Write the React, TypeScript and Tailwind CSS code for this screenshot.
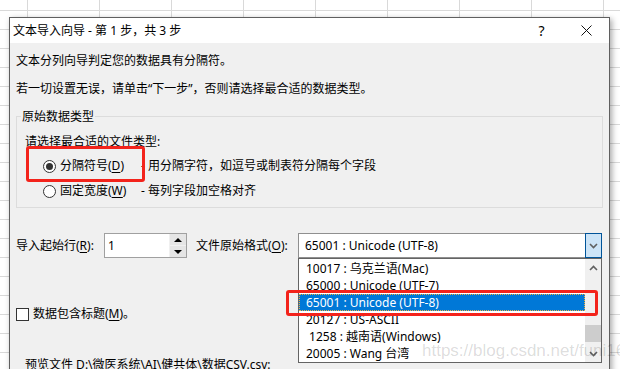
import React from "react";

const u = (c: string) => <span className="underline underline-offset-2">{c}</span>;

function Radio({ checked }: { checked?: boolean }) {
  return (
    <span className="flex h-[13px] w-[13px] items-center justify-center rounded-full border border-[#333] bg-white">
      {checked && <span className="h-[7px] w-[7px] rounded-full bg-[#333]" />}
    </span>
  );
}

function Chevron({ up }: { up?: boolean }) {
  return (
    <svg width="9" height="6" viewBox="0 0 9 6" className={up ? "" : "rotate-180"}>
      <path d="M1 5 L4.5 1.5 L8 5" fill="none" stroke="#606060" strokeWidth="1.6" />
    </svg>
  );
}

const encodings = [
  "10017 : 乌克兰语(Mac)",
  "65000 : Unicode (UTF-7)",
  "65001 : Unicode (UTF-8)",
  "20127 : US-ASCII",
  " 1258 : 越南语(Windows)",
  "20005 : Wang 台湾",
];

export default function App() {
  return (
    <div className="relative h-[369px] w-[620px] overflow-hidden bg-white bg-[linear-gradient(to_right,#d9d9d9_1px,transparent_1px),linear-gradient(to_bottom,#d9d9d9_1px,transparent_1px)] bg-[length:72px_19px] bg-[position:27px_10px] pl-[9px] pt-[17px] font-['Noto_Sans','Noto_Sans_CJK_SC',sans-serif] text-[12px] text-black">
      {/* Dialog */}
      <div className="h-[400px] w-[601px] border border-[#5f5f5f] bg-[#f0f0f0] shadow-[2px_2px_6px_rgba(0,0,0,0.35)]">
        {/* Title bar */}
        <div className="flex h-[25px] items-center bg-white pl-[3px]">
          <div className="flex-1 leading-[16px]">文本导入向导 - 第 1 步，共 3 步</div>
          <div className="flex w-[45px] justify-center text-[14px]">?</div>
          <div className="flex w-[45px] justify-center">
            <svg width="11" height="11" viewBox="0 0 11 11">
              <path d="M0.5 0.5 L10.5 10.5 M10.5 0.5 L0.5 10.5" stroke="#111" strokeWidth="1" />
            </svg>
          </div>
        </div>

        {/* Body */}
        <div className="px-[6px] leading-[16px]">
          <div className="mt-[10px]">文本分列向导判定您的数据具有分隔符。</div>
          <div className="mt-[12px]">若一切设置无误，请单击“下一步”，否则请选择最合适的数据类型。</div>

          {/* Group box */}
          <div className="mt-[19px] h-[92px] border border-[#dcdcdc]">
            <div className="-mt-[8px] ml-[4px] w-fit bg-[#f0f0f0] px-[1px]">原始数据类型</div>
            <div className="ml-[8px] mt-[9px]">请选择最合适的文件类型:</div>
            <div className="mt-[8px] flex h-[16px] items-center pl-[26px]">
              <Radio checked />
              <span className="ml-[4px] w-[81px]">分隔符号({u("D")})</span>
              <span>- 用分隔字符，如逗号或制表符分隔每个字段</span>
            </div>
            <div className="mt-[9px] flex h-[16px] items-center pl-[26px]">
              <Radio />
              <span className="ml-[4px] w-[81px]">固定宽度({u("W")})</span>
              <span>- 每列字段加空格对齐</span>
            </div>
          </div>

          {/* Start row / file origin */}
          <div className="mt-[25px] flex h-[25px] items-center">
            <span className="w-[88px]">导入起始行({u("R")}):</span>
            <div className="flex h-[25px] w-[83px] border border-[#a0a0a0] bg-white">
              <span className="flex-1 pl-[3px] leading-[23px]">1</span>
              <div className="flex w-[17px] flex-col gap-[1px] border-l border-[#f0f0f0] bg-[#f0f0f0]">
                <div className="flex flex-1 items-center justify-center bg-[#e5e5e5]">
                  <span className="h-0 w-0 border-x-[4px] border-b-[4px] border-x-transparent border-b-black" />
                </div>
                <div className="flex flex-1 items-center justify-center bg-[#e5e5e5]">
                  <span className="h-0 w-0 border-x-[4px] border-t-[4px] border-x-transparent border-t-black" />
                </div>
              </div>
            </div>
            <span className="ml-[9px] w-[102px]">文件原始格式({u("O")}):</span>
            <div className="flex h-[25px] w-[304px] items-center border border-[#8f8f8f] bg-white">
              <span className="flex-1 pl-[6px]">65001 : Unicode (UTF-8)</span>
              <div className="flex h-[25px] w-[17px] -mr-px items-center justify-center border border-[#005499] bg-[#cce4f7]">
                <Chevron />
              </div>
            </div>
          </div>

          {/* Header checkbox */}
          <div className="mt-[48px] flex h-[16px] items-center">
            <span className="h-[13px] w-[13px] border border-[#333] bg-white" />
            <span className="ml-[4px]">数据包含标题({u("M")})。</span>
          </div>

          <div className="ml-[9px] mt-[35px]">预览文件 D:\微医系统\AI\健共体\数据CSV.csv:</div>
        </div>
      </div>

      {/* Open dropdown list */}
      <div className="absolute left-[298px] top-[258px] flex h-[105px] w-[304px] border border-[#646464] bg-white leading-[17px]">
        <div className="flex-1 pt-[1px]">
          {encodings.map((e, i) => (
            <div
              key={e}
              className={
                i === 2
                  ? "h-[17px] whitespace-pre border border-dotted border-[#f0b040] bg-[#0078d7] pl-[6px] leading-[15px] text-white"
                  : "h-[17px] whitespace-pre pl-[7px]"
              }
            >
              {e}
            </div>
          ))}
        </div>
        <div className="flex w-[16px] flex-col bg-[#f0f0f0]">
          <div className="flex h-[17px] items-center justify-center">
            <Chevron up />
          </div>
          <div className="flex-1">
            <div className="mt-[49px] h-[17px] bg-[#cdcdcd]" />
          </div>
          <div className="flex h-[17px] items-center justify-center">
            <Chevron />
          </div>
        </div>
      </div>

      {/* Watermark */}
      <div className="absolute left-[422px] top-[338px] whitespace-nowrap font-['Liberation_Sans',sans-serif] text-[17px] text-black/[0.15]">
        https://blog.csdn.net/funi16
      </div>

      {/* Red annotation boxes */}
      <div className="absolute left-[26px] top-[146px] h-[36px] w-[119px] rounded-[3px] border-[3px] border-[#f3231b]" />
      <div className="absolute left-[286px] top-[290px] h-[26px] w-[312px] rounded-[3px] border-[3px] border-[#f3231b]" />
    </div>
  );
}
